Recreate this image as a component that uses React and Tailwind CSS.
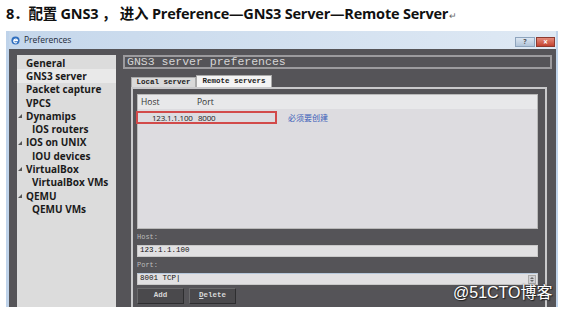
import { useState } from "react";

const navItems = [
  { label: "General", level: 0 },
  { label: "GNS3 server", level: 0, active: true },
  { label: "Packet capture", level: 0 },
  { label: "VPCS", level: 0 },
  { label: "Dynamips", level: 0, arrow: true },
  { label: "IOS routers", level: 1 },
  { label: "IOS on UNIX", level: 0, arrow: true },
  { label: "IOU devices", level: 1 },
  { label: "VirtualBox", level: 0, arrow: true },
  { label: "VirtualBox VMs", level: 1 },
  { label: "QEMU", level: 0, arrow: true },
  { label: "QEMU VMs", level: 1 },
];

const mono = "font-['Liberation_Mono','DejaVu_Sans_Mono',monospace]";
const sans = "font-['Open_Sans','Noto_Sans',sans-serif]";

const Sidebar = () => (
  <div className={`ml-[8px] w-[99px] bg-[#dcdcdc] flex flex-col pt-[1px] ${sans}`}>
    {navItems.map((item) => (
      <div
        key={item.label}
        className={`relative h-[13.3px] flex items-center text-[10px] font-bold text-[#1a1a1a] leading-none ${
          item.level ? "pl-[15px]" : "pl-[9px]"
        } ${item.active ? "bg-[#e9e9e9]" : ""}`}
      >
        {item.arrow && (
          <span className="absolute left-[1px] top-[5px] w-0 h-0 border-l-[4px] border-l-transparent border-b-[4px] border-b-[#555]" />
        )}
        {item.label}
      </div>
    ))}
  </div>
);

const Tabs = ({ tab, setTab }) => (
  <div className={`flex items-end pl-[8px] h-[12px] ${mono}`}>
    <button
      onClick={() => setTab("local")}
      className={`w-[65px] flex items-center justify-center text-[7.5px] font-bold leading-none text-[#222] border border-[#aaa] border-b-0 ${
        tab === "local" ? "bg-[#f4f4f4] h-[12px]" : "bg-[#d9d9d9] h-[10px]"
      }`}
    >
      Local server
    </button>
    <button
      onClick={() => setTab("remote")}
      className={`w-[76px] flex items-center justify-center text-[7.5px] font-bold leading-none text-[#222] border border-[#aaa] border-b-0 ${
        tab === "remote" ? "bg-[#f4f4f4] h-[12px]" : "bg-[#d9d9d9] h-[10px]"
      }`}
    >
      Remote servers
    </button>
  </div>
);

const ServerList = () => (
  <div className={`h-[135px] bg-[#dddce0] border border-[#b9b9b9] ${sans}`}>
    <div className="h-[14px] bg-[#e8e8ea] flex items-center text-[8.5px] text-[#333] leading-none">
      <span className="pl-[3px] w-[59px]">Host</span>
      <span>Port</span>
    </div>
    <div className="mt-[2px] h-[13px] flex items-center">
      <div className="relative w-[141px] h-[13px] flex items-center text-[8px] text-[#222] leading-none tracking-[-0.2px] -ml-[2px]">
        <span className="pl-[16px] w-[62px]">123.1.1.100</span>
        <span>8000</span>
        <div className="absolute inset-0 border-2 border-[#d24a4a]" />
      </div>
      <span className="ml-[11px] text-[8px] text-[#3b5cb8] font-['Noto_Sans_CJK_SC',sans-serif] leading-none">
        必须要创建
      </span>
    </div>
  </div>
);

const Field = ({ label, value, spinner }) => (
  <div className="flex flex-col">
    <div className={`h-[16px] flex items-center text-[7px] text-[#bcbcbc] leading-none ${mono}`}>
      {label}
    </div>
    <div
      className={`h-[12px] bg-[#e1e0e2] border border-[#c9c9c9] ${
        spinner ? "border-t-[#b6c8dc]" : ""
      } flex items-center justify-between pl-[2px] pr-[1px]`}
    >
      <span className={`text-[7.5px] text-[#111] leading-none ${mono}`}>{value}</span>
      {spinner && (
        <span className="w-[8px] h-[9px] bg-[#d0d0d4] border border-[#aaa] flex flex-col items-center justify-center gap-[1px]">
          <span className="w-0 h-0 border-x-[2px] border-x-transparent border-b-[2px] border-b-[#666]" />
          <span className="w-0 h-0 border-x-[2px] border-x-transparent border-t-[2px] border-t-[#666]" />
        </span>
      )}
    </div>
  </div>
);

const DarkButton = ({ children }) => (
  <button
    className={`h-[16px] w-[47px] bg-[#4a494c] border border-[#6a6a6c] border-b-[#2e2e30] border-r-[#2e2e30] text-[7.5px] font-bold text-[#d8d8d8] leading-none ${mono}`}
  >
    {children}
  </button>
);

export default function App() {
  const [tab, setTab] = useState("remote");

  return (
    <div className="relative w-[562px] h-[313px] bg-white overflow-hidden">
      <div className="h-[31px] pl-[6px] pt-[4px] flex items-start">
        <span className="text-[14.5px] font-bold text-[#111] leading-[20px] font-['Open_Sans','Noto_Sans_CJK_SC',sans-serif] tracking-[-0.2px]">
          8．配置 GNS3 ， 进入 Preference—GNS3 Server—Remote Server
          <span className="text-[9px] font-normal text-[#666] ml-[1px]">↵</span>
        </span>
      </div>

      <div className="ml-[6px] w-[552px] h-[276px] flex flex-col border-l-[3px] border-r-[2px] border-[#bfd3ea]">
        <div className="h-[18px] bg-gradient-to-r from-[#c5d7eb] to-[#dfe9f4] flex items-center pl-[2px] pr-[1px]">
          <svg width="9" height="9" viewBox="0 0 10 10" className="mr-[4px]">
            <circle cx="5" cy="5" r="4.5" fill="#2f6fbf" />
            <path d="M3 5.2h4.2A2.1 2.1 0 1 0 6.6 7" stroke="#fff" strokeWidth="1.3" fill="none" />
          </svg>
          <span className="text-[8.5px] text-[#1e2a3a] leading-none font-['Open_Sans',sans-serif]">Preferences</span>
          <div className="ml-auto flex gap-[1px] pt-[3px]">
            <div className="w-[20px] h-[10px] bg-gradient-to-b from-[#dbe6f2] to-[#b1c4d9] border border-[#8ea4bd] flex items-center justify-center text-[7px] font-bold text-[#555] leading-none">
              ?
            </div>
            <div className="w-[19px] h-[10px] bg-gradient-to-b from-[#e48a7a] to-[#c3412f] border border-[#8c3a30] flex items-center justify-center text-[8px] font-bold text-white leading-none">
              ×
            </div>
          </div>
        </div>

        <div className="flex-1 flex bg-[#555458] pt-[6px]">
          <Sidebar />
          <div className="ml-[7px] mr-[4px] flex-1 flex flex-col">
            <div className={`h-[14px] border-2 border-[#9c9b9e] flex items-center pl-[2px] text-[11.5px] text-[#d6d6d6] leading-none ${mono}`}>
              GNS3 server preferences
            </div>
            <div className="mt-[6px]">
              <Tabs tab={tab} setTab={setTab} />
            </div>
            <div className="flex-1 ml-[8px] mr-[5px] border-x-2 border-t-2 border-[#c9c9cb] pl-[4px] pr-[7px] pt-[5px] flex flex-col">
              <ServerList />
              <Field label="Host:" value="123.1.1.100" />
              <Field label="Port:" value={<>8001 TCP<span className="text-[#000]">|</span></>} spinner />
              <div className="mt-[3px] flex gap-[5px]">
                <DarkButton>Add</DarkButton>
                <DarkButton>
                  <span className="underline">D</span>elete
                </DarkButton>
              </div>
            </div>
          </div>
        </div>
      </div>

      <div className="absolute left-[453px] top-[285px] text-[16px] leading-none text-white font-['Liberation_Sans','Noto_Sans_CJK_SC',sans-serif] [text-shadow:0_0_2px_#222,1px_1px_1px_#222]">
        @51CTO博客
      </div>
    </div>
  );
}
